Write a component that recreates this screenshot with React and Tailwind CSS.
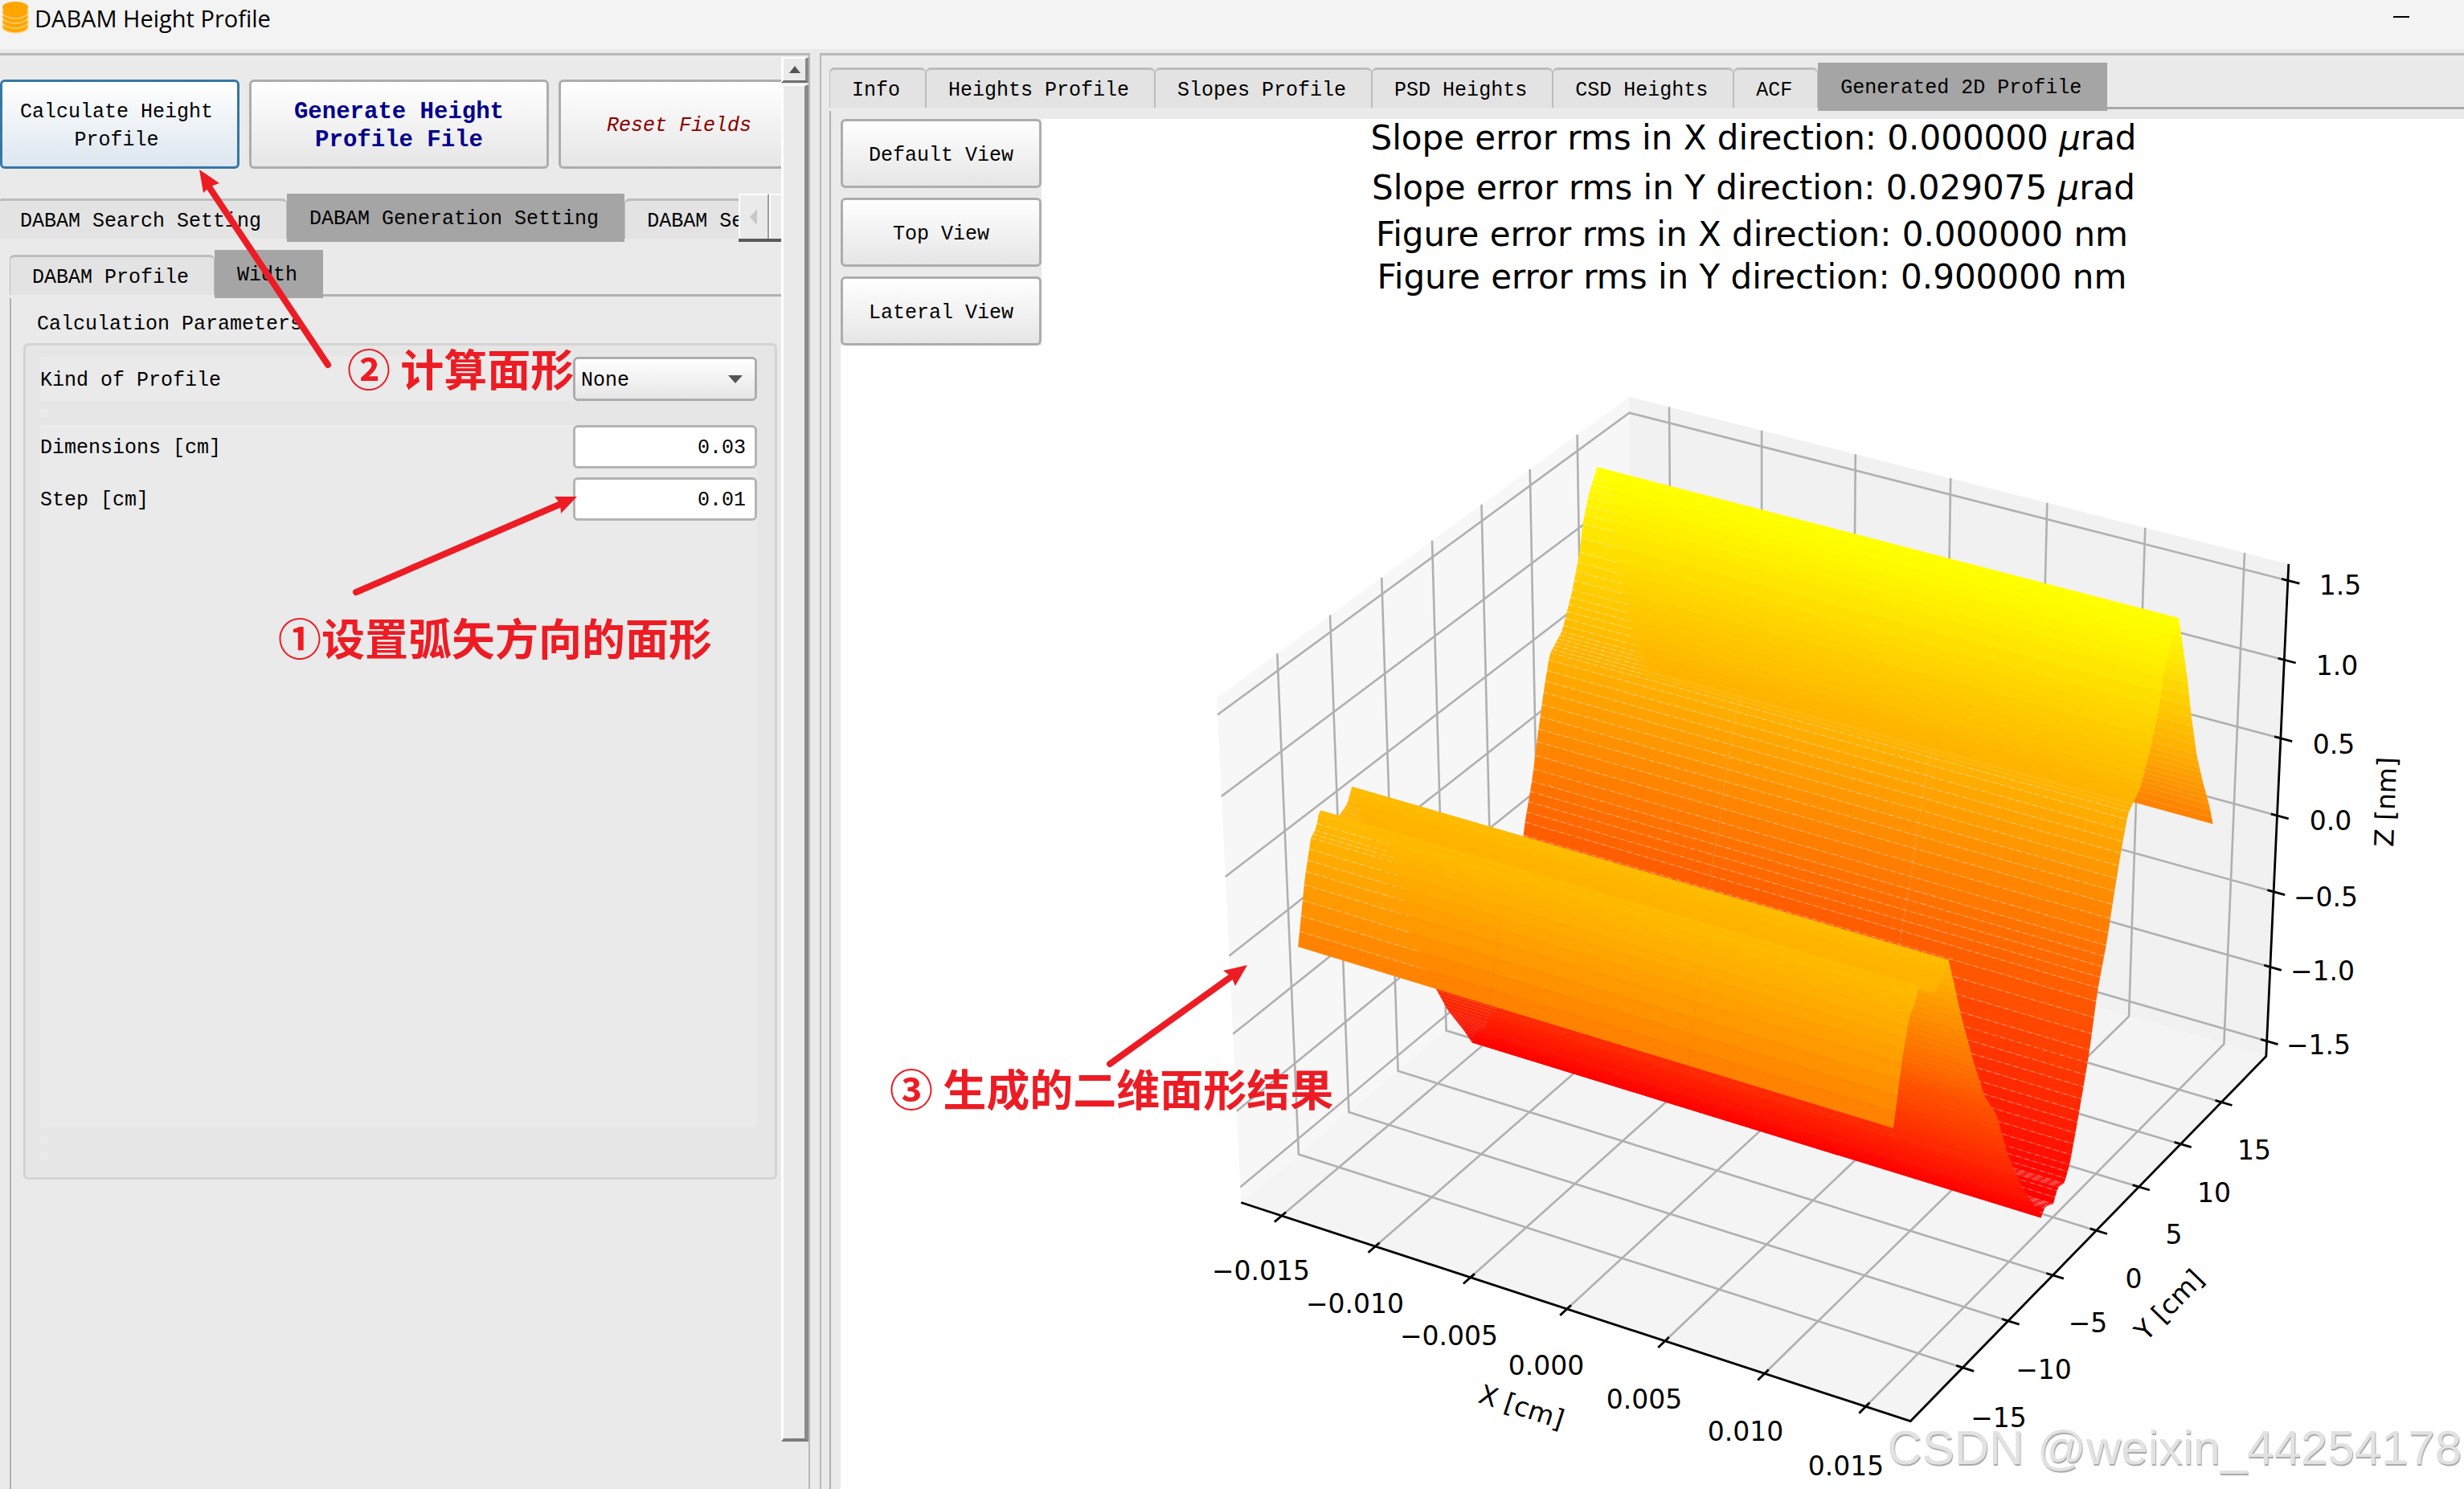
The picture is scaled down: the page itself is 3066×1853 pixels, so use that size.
import { useState } from "react";

const PLOT_TABS = [
  "Info",
  "Heights Profile",
  "Slopes Profile",
  "PSD Heights",
  "CSD Heights",
  "ACF",
  "Generated 2D Profile",
];

// ---- 3D projection (azim -60, elev 30) ----
const HALF = 0.5953;
const HALF_Z = 0.4466;
const X_LIM = 0.01719;
const Y_LIM = 20.6;
const Z_LIM = 1.603;
const SCALE = 8015;
const CX = 2193.8;
const CY = 1100.6;

const project = (X, Y, Z) => {
  const u = 0.866 * X + 0.5 * Y;
  const v = -0.25 * X + 0.433 * Y + 0.866 * Z;
  const d = 10 - (0.433 * X - 0.75 * Y + 0.5 * Z);
  return [CX + (SCALE * u) / d, CY - (SCALE * v) / d];
};

const toX = (x) => (x / X_LIM) * HALF;
const toY = (y) => (y / Y_LIM) * HALF;
const toZ = (z) => (z / Z_LIM) * HALF_Z;

const pts = (list) =>
  list.map(([x, y]) => `${x.toFixed(1)},${y.toFixed(1)}`).join(" ");

// Height profile, [y in cm, z in nm]
const PROFILE = [
  [-18, 0], [-17.1, 0.395], [-16.4, 0.605], [-15.9, 0.64], [-15.5, 0.735],
  [-14.6, 0.66], [-13.9, 0.6], [-13.4, 0.62], [-12.9, 0.64], [-12.4, 0.725],
  [-11.8, 0.56], [-10.85, 0.279], [-9.4, -0.08], [-8.2, -0.348], [-6.74, -0.557],
  [-5.52, -0.861], [-3.77, -1.178], [-2.2, -1.4], [-1.4, -1.525], [-0.96, -1.48],
  [0, -1.515], [0.5, -1.435], [1.26, -1.45], [1.85, -1.352], [2.79, -1.066],
  [3.77, -0.734], [4.5, -0.39], [5.48, -0.108], [6.07, 0.128], [6.86, 0.405],
  [7.5, 0.597], [8.86, 0.689], [9.94, 0.884], [10.77, 1.09], [11.2, 1.27],
  [11.9, 1.435], [12.8, 1.56], [13.4, 1.364], [14.2, 1.09], [14.75, 0.862],
  [15.65, 0.555], [16.5, 0.352], [17.5, 0.137], [18, 0],
];

const heightAt = (y) => {
  for (let i = 1; i < PROFILE.length; i++) {
    const [y0, z0] = PROFILE[i - 1];
    const [y1, z1] = PROFILE[i];
    if (y <= y1) return z0 + ((z1 - z0) * (y - y0)) / (y1 - y0);
  }
  return 0;
};

const STEPS = 180;
const X_NODES = [-0.015, -0.005, 0.005, 0.015];

// How far along x the light mesh line of a strip runs
const meshEnd = (y) => {
  if (y > 12.6) return null;
  if (y > 7.8) return -0.0102 - ((y - 7.8) / 4.8) * 0.004;
  if (y > -1.2) return 0.015;
  if (y < -15.6) return -0.0115 + ((-15.6 - y) / 2.4) * 0.003;
  return null;
};

// Painter's order: far strips first
const buildSurface = () => {
  const strips = [];
  for (let i = STEPS; i > 0; i--) {
    const yFar = -18 + (36 * i) / STEPS;
    const yNear = -18 + (36 * (i - 1)) / STEPS;
    const zFar = heightAt(yFar);
    const zNear = heightAt(yNear);
    const level = ((zFar + zNear) / 2 + 1.53) / 3.06;
    const green = Math.round(Math.max(0, Math.min(1, level)) * 255);
    const quads = [];
    for (let j = 0; j < 3; j++) {
      const a = toX(X_NODES[j]);
      const b = toX(X_NODES[j + 1]);
      quads.push(
        pts([
          project(a, toY(yFar), toZ(zFar)),
          project(b, toY(yFar), toZ(zFar)),
          project(b, toY(yNear), toZ(zNear)),
          project(a, toY(yNear), toZ(zNear)),
        ])
      );
    }
    const end = meshEnd(yFar);
    const mesh =
      end === null
        ? null
        : pts([
            project(toX(-0.015), toY(yFar), toZ(zFar)),
            project(toX(end), toY(yFar), toZ(zFar)),
          ]);
    strips.push({ fill: `rgb(255,${green},0)`, quads, mesh });
  }
  return strips;
};

const SURFACE = buildSurface();

const X_TICKS = [
  [-0.015, "−0.015", 1569, 1593],
  [-0.01, "−0.010", 1686, 1634],
  [-0.005, "−0.005", 1803, 1674],
  [0, "0.000", 1924, 1711],
  [0.005, "0.005", 2046, 1753],
  [0.01, "0.010", 2172, 1793],
  [0.015, "0.015", 2297, 1836],
];
const Y_TICKS = [
  [-15, "−15", 2487, 1776],
  [-10, "−10", 2543, 1716],
  [-5, "−5", 2598, 1658],
  [0, "0", 2655, 1603],
  [5, "5", 2705, 1548],
  [10, "10", 2755, 1496],
  [15, "15", 2805, 1443],
];
const Z_TICKS = [
  [-1.5, "−1.5", 2885, 1312],
  [-1, "−1.0", 2890, 1220],
  [-0.5, "−0.5", 2894, 1128],
  [0, "0.0", 2900, 1033],
  [0.5, "0.5", 2904, 938],
  [1, "1.0", 2908, 840],
  [1.5, "1.5", 2912, 740],
];

function Line3D({ path, ...rest }) {
  return <polyline points={pts(path.map((p) => project(...p)))} fill="none" {...rest} />;
}

function SurfacePlot() {
  const a = HALF;
  const h = HALF_Z;
  const pane = (corners) => pts(corners.map((c) => project(...c)));

  return (
    <svg
      viewBox="1296 148 1770 1705"
      className="block w-full overflow-visible font-['DejaVu_Sans',sans-serif]"
      role="img"
      aria-label="Generated 2D profile"
    >
      {/* Panes */}
      <polygon points={pane([[-a, -a, -h], [-a, a, -h], [-a, a, h], [-a, -a, h]])} fill="#f7f7f7" />
      <polygon points={pane([[-a, a, -h], [a, a, -h], [a, a, h], [-a, a, h]])} fill="#f1f1f1" />
      <polygon points={pane([[-a, -a, -h], [a, -a, -h], [a, a, -h], [-a, a, -h]])} fill="#f4f4f4" />

      {/* Grid */}
      <g stroke="#b0b0b0" strokeWidth="2.6">
        {X_TICKS.map(([x]) => (
          <Line3D key={x} path={[[toX(x), -a, -h], [toX(x), a, -h], [toX(x), a, h]]} />
        ))}
        {Y_TICKS.map(([y]) => (
          <Line3D key={y} path={[[a, toY(y), -h], [-a, toY(y), -h], [-a, toY(y), h]]} />
        ))}
        {Z_TICKS.map(([z]) => (
          <Line3D key={z} path={[[-a, -a, toZ(z)], [-a, a, toZ(z)], [a, a, toZ(z)]]} />
        ))}
      </g>

      {/* Axes */}
      <g stroke="#000" strokeWidth="2.8">
        <Line3D path={[[-a, -a, -h], [a, -a, -h], [a, a, -h], [a, a, h]]} />
        {X_TICKS.map(([x]) => (
          <Line3D key={x} path={[[toX(x), -a - 0.02, -h], [toX(x), -a + 0.012, -h]]} />
        ))}
        {Y_TICKS.map(([y]) => (
          <Line3D key={y} path={[[a + 0.019, toY(y), -h], [a - 0.011, toY(y), -h]]} />
        ))}
        {Z_TICKS.map(([z]) => (
          <Line3D key={z} path={[[a + 0.02, a, toZ(z)], [a - 0.011, a, toZ(z)]]} />
        ))}
      </g>

      {/* Surface */}
      {SURFACE.map((strip, i) => (
        <g key={i} fill={strip.fill}>
          {strip.quads.map((q, j) => (
            <polygon key={j} points={q} />
          ))}
          {strip.mesh && (
            <polyline
              points={strip.mesh}
              stroke="#fff"
              strokeOpacity="0.28"
              strokeWidth="1.4"
              strokeDasharray="6 5"
            />
          )}
        </g>
      ))}

      {/* Tick labels */}
      <g fontSize="33" textAnchor="middle">
        {[...X_TICKS, ...Y_TICKS, ...Z_TICKS].map(([, label, x, y]) => (
          <text key={`${x}-${y}`} x={x} y={y}>
            {label}
          </text>
        ))}
        <text transform="translate(1893 1752) rotate(18)" y="10">X [cm]</text>
        <text transform="translate(2700 1625) rotate(-46)" y="10">Y [cm]</text>
        <text transform="translate(2970 998) rotate(-88)" y="10">Z [nm]</text>
      </g>

      {/* Titles */}
      <g fontSize="42" textAnchor="middle">
        <text x="2182" y="186">
          Slope error rms in X direction: 0.000000 <tspan fontStyle="italic">μ</tspan>rad
        </text>
        <text x="2182" y="248">
          Slope error rms in Y direction: 0.029075 <tspan fontStyle="italic">μ</tspan>rad
        </text>
        <text x="2180" y="306">Figure error rms in X direction: 0.000000 nm</text>
        <text x="2180" y="359">Figure error rms in Y direction: 0.900000 nm</text>
      </g>
    </svg>
  );
}

function Tab({ label, active, onClick }) {
  return (
    <button
      role="tab"
      aria-selected={active}
      onClick={onClick}
      className={
        active
          ? "h-[60px] shrink-0 whitespace-nowrap bg-[#a5a5a5] pt-[3px] pr-[32px] pl-[28px]"
          : "mt-[6px] h-[50px] shrink-0 whitespace-nowrap rounded-t-md border-x border-t-[3px] border-[#bdbdbd] bg-[#e3e3e3] pt-[3px] pr-[31px] pl-[27px]"
      }
    >
      {label}
    </button>
  );
}

function PushButton({ children, className = "" }) {
  return (
    <button
      className={`shrink-0 rounded-md border-[3px] border-[#adadad] bg-linear-to-b from-white to-[#e6e6e6] pt-[4px] ${className}`}
    >
      {children}
    </button>
  );
}

function NumberField({ id, label, value }) {
  return (
    <div className="flex h-[54px] items-center justify-between">
      <label htmlFor={id} className="pt-[3px]">{label}</label>
      <input
        id={id}
        defaultValue={value}
        className="h-[54px] w-[229px] rounded-md border-[3px] border-[#b4b4b4] bg-white pt-[3px] pr-[11px] text-right"
      />
    </div>
  );
}

function AppIcon() {
  return (
    <svg viewBox="0 0 36 42" className="h-[42px] w-[36px]" aria-hidden="true">
      <g fill="#ffa500" stroke="#ffd382" strokeWidth="1.5">
        <ellipse cx="19" cy="33" rx="16" ry="8" />
        <ellipse cx="19" cy="27" rx="16" ry="8" />
        <ellipse cx="19" cy="21" rx="16" ry="8" />
        <ellipse cx="19" cy="15" rx="16" ry="8" />
      </g>
      <ellipse cx="19" cy="9" rx="16" ry="7" fill="#ffa500" />
    </svg>
  );
}

function Annotations() {
  return (
    <div className="pointer-events-none absolute inset-0 font-['Noto_Sans_CJK_SC',sans-serif] text-[54px] leading-[54px] font-bold whitespace-pre text-[#ed1c24]">
      <svg viewBox="0 0 3066 1853" className="block w-full" aria-hidden="true">
        <g stroke="#ed1c24" strokeWidth="8" strokeLinecap="round">
          <line x1="408" y1="454" x2="259" y2="231" />
          <line x1="443" y1="737" x2="698" y2="627" />
          <line x1="1381" y1="1324" x2="1534" y2="1214" />
        </g>
        <g fill="#ed1c24">
          <polygon points="248,211 273,228 262,232 253,240" />
          <polygon points="718,618 690,618 697,627 698,639" />
          <polygon points="1552,1201 1522,1208 1532,1215 1537,1227" />
        </g>
      </svg>
      <span className="absolute top-[431px] left-[432px]">② 计算面形</span>
      <span className="absolute top-[766px] left-[346px]">①设置弧矢方向的面形</span>
      <span className="absolute top-[1327px] left-[1107px]">③ 生成的二维面形结果</span>
      <span className="absolute right-[3px] bottom-[24px] font-['Liberation_Sans',sans-serif] text-[60px] font-normal text-[#e2e2e2] [text-shadow:1px_2px_1px_#a8a8a8]">
        CSDN @weixin_44254178
      </span>
    </div>
  );
}

function App() {
  const [plotTab, setPlotTab] = useState("Generated 2D Profile");
  const [settingTab, setSettingTab] = useState("DABAM Generation Setting");
  const [innerTab, setInnerTab] = useState("Width");

  return (
    <div className="relative flex min-h-screen flex-col overflow-hidden bg-[#eaeaea] font-['Liberation_Mono',monospace] text-[25px] leading-[35px] text-black">
      {/* Title bar */}
      <header className="flex h-[61px] items-start justify-between bg-[#f3f3f3]">
        <div className="flex items-center gap-[7px]">
          <AppIcon />
          <h1 className="pt-[2px] font-['Open_Sans',sans-serif] text-[29px]">DABAM Height Profile</h1>
        </div>
        <button aria-label="Minimize" className="mr-[58px] flex h-[42px] w-[40px] items-center justify-center">
          <span className="h-[2px] w-[20px] bg-black" />
        </button>
      </header>

      <main className="flex flex-1 gap-[12px] pt-[5px]">
        {/* Settings panel */}
        <aside className="flex w-[1008px] shrink-0 border-t-[3px] border-r-2 border-[#b8b8b8]">
          <div className="flex w-[972px] shrink-0 flex-col overflow-hidden pt-[30px]">
            <div className="flex h-[111px] gap-[12px]">
              <button className="w-[298px] shrink-0 rounded-md border-[3px] border-[#3577a5] bg-linear-to-b from-white to-[#dde6ef] pt-[4px] pr-[24px] pl-[16px]">
                Calculate Height Profile
              </button>
              <PushButton className="w-[373px] px-[40px] text-[29px] font-bold text-[#00008b]">
                Generate Height Profile File
              </PushButton>
              <PushButton className="w-[300px] text-[#8b0000] italic">Reset Fields</PushButton>
            </div>

            <div className="relative mt-[31px] flex h-[60px]" role="tablist">
              <div className="-ml-[3px] flex">
                {["DABAM Search Setting", "DABAM Generation Setting", "DABAM Setting"].map((t) => (
                  <Tab key={t} label={t} active={t === settingTab} onClick={() => setSettingTab(t)} />
                ))}
              </div>
              <div className="absolute top-0 right-0 flex h-[60px] w-[53px] border-b-[4px] border-[#5a5a5a]">
                <button
                  aria-label="Scroll tabs left"
                  className="flex w-[38px] items-center justify-center border-t-2 border-r-2 border-l-2 border-t-white border-r-[#9a9a9a] border-l-white bg-[#eaeaea]"
                >
                  <svg viewBox="0 0 10 20" className="h-[20px] w-[10px]" aria-hidden="true">
                    <path d="M9 0v20L0 10z" fill="#c8c8c8" />
                  </svg>
                </button>
                <button
                  aria-label="Scroll tabs right"
                  className="flex-1 border-t-2 border-l-2 border-white bg-[#eaeaea]"
                />
              </div>
            </div>

            <div className="mt-[10px] flex h-[60px] pl-[12px]" role="tablist">
              {["DABAM Profile", "Width"].map((t) => (
                <Tab key={t} label={t} active={t === innerTab} onClick={() => setInnerTab(t)} />
              ))}
              <div className="mb-[2px] flex-1 border-b-[3px] border-[#b0b0b0]" />
            </div>

            <div className="ml-[12px] flex-1 border-l-2 border-[#b0b0b0] pt-[15px] pr-[5px] pl-[15px]">
              <h2 className="pl-[17px]">Calculation Parameters</h2>
              <div className="mt-[6px] rounded-md border-[3px] border-[#d4d4d4] bg-[#e6e6e6] pt-[14px] pr-[22px] pb-[22px] pl-[18px]">
                <div className="flex h-[55px] items-center justify-between bg-[#eaeaea]">
                  <label htmlFor="kind" className="pt-[3px]">Kind of Profile</label>
                  <div className="relative">
                    <select
                      id="kind"
                      className="block h-[55px] w-[229px] appearance-none rounded-md border-[3px] border-[#adadad] bg-linear-to-b from-white to-[#e6e6e6] pt-[3px] pl-[7px]"
                    >
                      <option>None</option>
                    </select>
                    <svg
                      viewBox="0 0 18 10"
                      className="pointer-events-none absolute top-[23px] right-[18px] h-[10px] w-[18px]"
                      aria-hidden="true"
                    >
                      <path d="M0 0h18L9 10z" fill="#555" />
                    </svg>
                  </div>
                </div>
                <div className="my-[10px] h-[10px] w-[10px] bg-[#eaeaea]" />
                <div className="flex min-h-[874px] flex-col gap-[11px] bg-[#eaeaea]">
                  <NumberField id="dimensions" label="Dimensions [cm]" value="0.03" />
                  <NumberField id="step" label="Step [cm]" value="0.01" />
                </div>
                <div className="mt-[10px] h-[10px] w-[10px] bg-[#eaeaea]" />
                <div className="mt-[10px] h-[10px] w-[10px] bg-[#eaeaea]" />
              </div>
            </div>
          </div>

          {/* Scroll bar */}
          <div className="flex flex-1 flex-col pt-[2px] pb-[59px]">
            <button
              aria-label="Scroll up"
              className="flex h-[32px] items-center justify-center border-t-2 border-r-[4px] border-b-[3px] border-l-[3px] border-t-white border-r-[#8a8a8a] border-b-[#6e6e6e] border-l-white"
            >
              <svg viewBox="0 0 14 9" className="h-[9px] w-[14px]" aria-hidden="true">
                <path d="M0 9h14L7 0z" fill="#555" />
              </svg>
            </button>
            <div className="mt-[2px] flex-1 border-t-2 border-r-[5px] border-b-[4px] border-l-[3px] border-t-white border-r-[#8a8a8a] border-b-[#7c7c7c] border-l-white" />
          </div>
        </aside>

        {/* Plot panel */}
        <section className="flex min-w-0 flex-1 flex-col border-t-[3px] border-l-2 border-[#b8b8b8] pt-[9px] pl-[10px]">
          <div className="flex h-[60px]" role="tablist">
            {PLOT_TABS.map((t) => (
              <Tab key={t} label={t} active={t === plotTab} onClick={() => setPlotTab(t)} />
            ))}
            <div className="mb-[2px] flex-1 border-b-[3px] border-[#a8a8a8]" />
          </div>
          <div className="flex flex-1 flex-col border-l-2 border-[#b0b0b0] pt-[10px] pl-[12px]">
            <div className="flex flex-1 items-start bg-white">
              <div className="flex w-[250px] shrink-0 flex-col gap-[12px] bg-[#eaeaea]">
                <PushButton className="h-[86px]">Default View</PushButton>
                <PushButton className="h-[86px]">Top View</PushButton>
                <PushButton className="h-[86px]">Lateral View</PushButton>
              </div>
              <div className="min-w-0 flex-1">
                <SurfacePlot />
              </div>
            </div>
          </div>
        </section>
      </main>

      <Annotations />
    </div>
  );
}

export default App;
